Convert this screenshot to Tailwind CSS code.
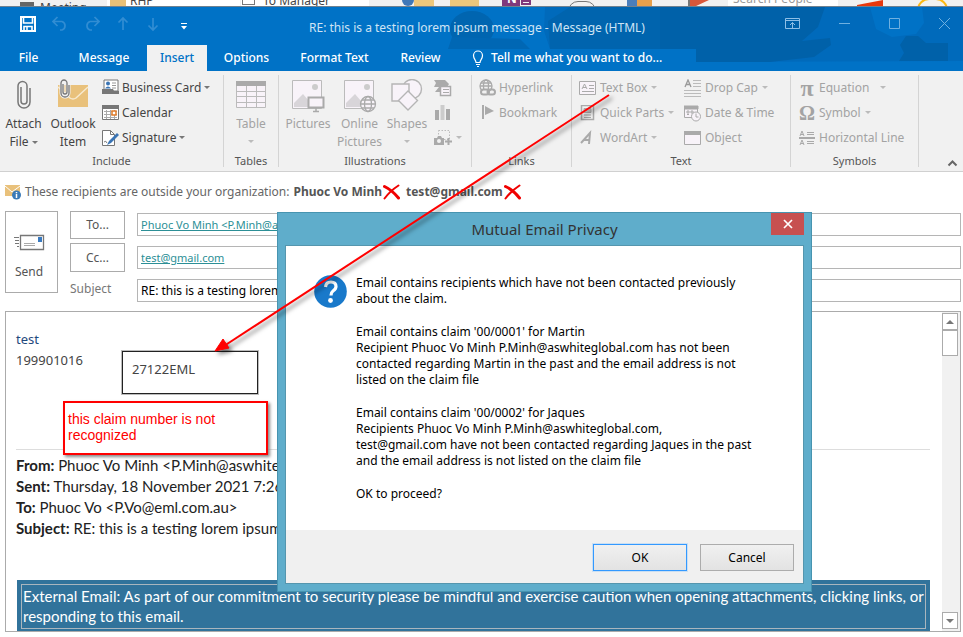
<!DOCTYPE html>
<html lang="en">
<head>
<meta charset="utf-8">
<title>RE: this is a testing lorem ipsum message - Message (HTML)</title>
<script src="https://cdn.jsdelivr.net/npm/@tailwindcss/browser@4"></script>
</head>
<body class="relative flex min-h-screen flex-col overflow-hidden bg-white font-['Noto_Sans','Open_Sans',sans-serif] text-[12px] leading-4 text-[#444]">

<!-- window behind -->
<div class="relative h-[7px] shrink-0 overflow-hidden border-b border-[#6f8190] bg-[#f1f1f1]" aria-hidden="true">
  <div class="absolute left-5 top-[2px] h-4 w-[14px] bg-[#666]"></div>
  <div class="absolute left-[40px] top-0 text-[12px] leading-4">Meeting</div>
  <div class="absolute left-[107px] top-0 h-4 w-[133px] bg-white"></div>
  <div class="absolute left-[110px] top-0 h-4 w-4 bg-[#e8c078]"></div>
  <div class="absolute left-[130px] -top-[7px] text-[12px] leading-4">RHP</div>
  <div class="absolute left-[241px] top-0 h-4 w-[128px] bg-white"></div>
  <div class="absolute left-[242px] -top-[5px] h-[10px] w-[13px] border border-[#777]"></div>
  <div class="absolute left-[263px] -top-[7px] text-[12px] leading-4">To Manager</div>
  <div class="absolute left-[402px] -top-[6px] h-3 w-3 rounded-full bg-[#3f78b8]"></div>
  <div class="absolute left-[414px] top-0 h-4 w-[20px] bg-[#ecc77c]"></div>
  <div class="absolute left-[450px] top-0 h-4 w-[29px] bg-[#ecc77c]"></div>
  <div class="absolute left-[502px] top-0 h-4 w-[18px] bg-[#80397b]"></div>
  <div class="absolute left-[507px] -top-[9px] text-[12px] font-bold leading-4 text-white">N</div>
  <div class="absolute left-[521px] top-0 h-[5px] w-[10px] border-2 border-[#80397b]"></div>
  <div class="absolute left-[568px] top-[1px] h-5 w-7 rounded-full border border-[#777]"></div>
  <div class="absolute left-[627px] top-0 h-4 w-[10px] bg-[#4a7ebb]"></div>
  <div class="absolute left-[637px] top-0 h-4 w-[15px] bg-[#e8a04c]"></div>
  <div class="absolute left-[688px] top-0 h-4 w-[2px] bg-[#777]"></div>
  <svg class="absolute left-[690px] top-0" width="20" height="7"><path d="M0 0h19L4 7H0z" fill="#d9573a"/></svg>
  <div class="absolute left-[728px] top-0 h-4 w-[110px] bg-white"></div>
  <div class="absolute left-[733px] -top-[9px] text-[12px] leading-4 text-[#999]">Search People</div>
  <svg class="absolute left-[857px] top-0" width="28" height="7"><path d="M0 5L26 0v7H0z" fill="#e8380d"/></svg>
  <div class="absolute left-[917px] -top-[2px] h-6 w-[31px] rounded-full border-2 border-[#fdb913]"></div>
</div>

<!-- title bar and tabs -->
<header class="relative shrink-0 bg-[#0072c6] text-white">
  <svg class="absolute inset-y-0 right-0" width="643" height="64" viewBox="0 0 643 64" aria-hidden="true">
    <ellipse cx="152" cy="22" rx="22" ry="18" fill="#0065b0"/>
    <path d="M132 30L200 32L210 42H128z" fill="#0067b4"/>
    <path d="M225 0L643 0L643 54L376 55L376 42L230 42L224 24z" fill="#006abb"/>
    <path d="M228 14L250 0L340 0L340 42L230 42z" fill="#0064ae"/>
    <path d="M340 0L505 0L498 20L482 34L510 31L511 38L494 50L450 55L376 55L376 42L340 42z" fill="#0061a9"/>
    <path d="M550 0L602 0L604 16L596 27L572 30L556 22z" fill="#0072c6"/>
    <path d="M579 54L584 46L580 38L586 29L598 29L606 36L628 36L628 54z" fill="#0061a9"/>
  </svg>
  <div class="relative flex h-[38px] items-center">
    <div class="flex w-[309px] items-center gap-4 pl-5 pb-1">
      <button aria-label="Save"><svg width="16" height="16" fill="none" stroke="#fff" stroke-width="2"><path d="M1 1h14v14H1z"/><path d="M3.500 1v6h9V1M4 15v-4.500h8V15" stroke-width="1.600"/><path d="M7 11v4" stroke-width="1.500"/></svg></button>
      <button aria-label="Undo"><svg width="16" height="16" fill="none" stroke="#318dd3" stroke-width="1.700"><path d="M5.500 1L1 5.500L5.500 10M1.500 5.500H10a4.500 4.500 0 0 1 0 8.500H8"/></svg></button>
      <button aria-label="Redo"><svg width="16" height="16" fill="none" stroke="#318dd3" stroke-width="1.700"><path d="M10.500 1L15 5.500L10.500 10M14.500 5.500H6a4.500 4.500 0 0 0 0 8.500h2"/></svg></button>
      <button aria-label="Previous"><svg width="14" height="16" fill="none" stroke="#318dd3" stroke-width="1.700"><path d="M7 2v12M2.500 6.500L7 2l4.500 4.500"/></svg></button>
      <button aria-label="Next"><svg width="14" height="16" fill="none" stroke="#318dd3" stroke-width="1.700"><path d="M7 2v12M2.500 9.500L7 14l4.500-4.500"/></svg></button>
      <button aria-label="Customize toolbar"><svg width="16" height="16"><path d="M5 7.500h6" stroke="#fff"/><path d="M5 10h6l-3 3.500z" fill="#fff"/></svg></button>
    </div>
    <h1 class="whitespace-nowrap pt-1 text-[12px] text-[#cfe4f5]">RE: this is a testing lorem ipsum message - Message (HTML)</h1>
    <div class="ml-auto flex items-center gap-[37px] pr-3 pb-1">
      <button aria-label="Ribbon display options"><svg width="16" height="14" fill="none" stroke="#8fbfe6"><path d="M.5 1.500h14v10H.5zM.5 3.500h14M7.500 11V5.500M5 8l2.500-2.500L10 8"/></svg></button>
      <button aria-label="Minimize"><svg width="13" height="14" stroke="#6fb0e0"><path d="M1 6.500h11"/></svg></button>
      <button aria-label="Maximize"><svg width="13" height="14" fill="none" stroke="#6fb0e0"><path d="M1.500 1.500h10v10h-10z"/></svg></button>
      <button aria-label="Close"><svg width="13" height="14" stroke="#6fb0e0"><path d="M1 1l11 11M12 1L1 12"/></svg></button>
    </div>
  </div>
  <nav class="relative flex h-[26px] items-center font-medium">
    <button class="w-[57px]">File</button>
    <button class="w-[90px] pl-1">Message</button>
    <button class="h-full w-[60px] bg-[#f1f1f1] text-[#0072c6]">Insert</button>
    <button class="w-[79px]">Options</button>
    <button class="w-[97px]">Format Text</button>
    <button class="w-[75px]">Review</button>
    <button class="flex items-center gap-[7px] whitespace-nowrap pl-[14px]"><svg width="12" height="17" fill="none" stroke="#fff" stroke-width="1.200"><path d="M4 12.500C4 10 1.500 9 1.500 5.500a4.500 4.500 0 0 1 9 0C10.500 9 8 10 8 12.500zM4 14.500h4M5 16.500h2"/></svg>Tell me what you want to do...</button>
  </nav>
</header>

<!-- ribbon -->
<section class="flex h-[101px] shrink-0 whitespace-nowrap border-b border-[#d0d0d0] bg-[#f1f1f1] py-1" aria-label="Insert ribbon">
  <div class="flex w-[224px] flex-col border-r border-[#d4d4d4]">
    <div class="flex h-[75px] shrink-0">
      <button class="flex w-[47px] flex-col items-center leading-[18px]"><svg class="mb-1 mt-1 shrink-0" width="16" height="32" fill="none" stroke="#777" stroke-width="1.500"><path d="M5 8v14a3 3 0 0 0 6 0V7a4.500 4.500 0 0 0-9 0v16a6 6 0 0 0 12 0V9"/></svg><span>Attach</span><span>File<span class="ml-[3px] inline-block border-x-3 border-t-3 border-x-transparent border-t-[#777] align-middle"></span></span></button>
      <button class="flex w-[52px] flex-col items-center leading-[18px]"><svg class="mb-1 mt-1 shrink-0" width="32" height="32" fill="none"><path d="M1 6h30v22H1z" fill="#e9c17b"/><path d="M1 8l12 11q3 2 6 0L31 8" stroke="#f7ead0" stroke-width="1.500"/><path d="M6 5v8a2 2 0 0 0 4 0V4a3 3 0 0 0-6 0v10a4 4 0 0 0 8 0V6" stroke="#f1f1f1" stroke-width="3"/><path d="M6 5v8a2 2 0 0 0 4 0V4a3 3 0 0 0-6 0v10a4 4 0 0 0 8 0V6" stroke="#777" stroke-width="1.300"/></svg><span>Outlook</span><span>Item</span></button>
      <div class="flex flex-col pl-[3px]">
        <button class="flex h-[25px] items-center gap-[3px]"><svg width="17" height="17" fill="none"><path d="M2 1h14v11H2z" fill="#fff" stroke="#777"/><path d="M10 4h4M10 6.500h4M10 9h4" stroke="#999"/><circle cx="6" cy="4.500" r="2" fill="#3a74b4"/><path d="M3 9.500q3-4 6 0z" fill="#3a74b4"/><path d="M0 10h11l1 2h5v3H0z" fill="#777"/></svg>Business Card<span class="border-x-3 border-t-3 border-x-transparent border-t-[#777]"></span></button>
        <button class="flex h-[25px] items-center gap-[3px]"><svg width="17" height="17" fill="none"><path d="M.5 1.500h16v14H.5z" fill="#fff" stroke="#777"/><path d="M0 1h17v4H0z" fill="#777"/><path d="M2 7.500h13M2 10.500h13M2 13.500h13M4.500 6v9M8.500 6v9M12.500 6v9" stroke="#aaa"/><path d="M10 7h4v4h-4z" fill="#fff" stroke="#e07b28" stroke-width="1.500"/></svg>Calendar</button>
        <button class="flex h-[25px] items-center gap-[3px]"><svg width="17" height="18" fill="none"><path d="M.5 1.500h8l4 4v11H.5z" fill="#fff" stroke="#777"/><path d="M8.500 1.500v4h4" stroke="#777"/><path d="M15 4l2 2-8 8-4 2 2-4z" fill="#3a74b4"/><path d="M2 13q2-2 3 1" stroke="#777"/></svg>Signature<span class="border-x-3 border-t-3 border-x-transparent border-t-[#777]"></span></button>
      </div>
    </div>
    <div class="pt-[3px] text-center text-[11px] leading-4 text-[#555]">Include</div>
  </div>
  <div class="flex w-[55px] flex-col border-r border-[#d4d4d4] text-[#a3a3a3]">
    <button class="flex h-[75px] shrink-0 flex-col items-center leading-[18px]"><svg class="mb-1 mt-1 shrink-0" width="32" height="32" fill="none" stroke="#bbb"><path d="M1.500 2.500h29v26h-29z" fill="#f8f3f9"/><path d="M1.500 12.500h29M1.500 17.500h29M1.500 23.500h29M11.500 7v21M21.500 7v21"/><path d="M1 2h30v5H1z" fill="#aaa" stroke="none"/></svg><span>Table</span><span class="mt-[7px] border-x-3 border-t-3 border-x-transparent border-t-[#bbb]"></span></button>
    <div class="pt-[3px] text-center text-[11px] leading-4 text-[#555]">Tables</div>
  </div>
  <div class="flex w-[193px] flex-col border-r border-[#d4d4d4] text-[#a3a3a3]">
    <div class="flex h-[75px] shrink-0 pl-[3px]">
      <button class="flex w-[52px] flex-col items-center leading-[18px]"><svg class="mb-[2px] mt-1 shrink-0" width="34" height="34" fill="none"><path d="M1.500 1.500h29v28h-29z" fill="#f8f3f9" stroke="#bbb"/><path d="M3 28V24l9-9 6 7v6z" fill="#d8d5d9"/><circle cx="24" cy="8" r="3" fill="#ccc"/><path d="M17.500 18.500h15v10h-15z" fill="#f8f3f9" stroke="#aaa" stroke-width="2"/><path d="M25 29v3M22 32.500h6" stroke="#aaa" stroke-width="1.500"/></svg><span>Pictures</span></button>
      <button class="flex w-[51px] flex-col items-center leading-[18px]"><svg class="mb-[2px] mt-1 shrink-0" width="34" height="34" fill="none"><path d="M1.500 1.500h29v28h-29z" fill="#f8f3f9" stroke="#bbb"/><path d="M3 28V24l9-9 6 7v6z" fill="#d8d5d9"/><circle cx="24" cy="8" r="3" fill="#ccc"/><g stroke="#aaa" stroke-width="1.300"><circle cx="25" cy="25" r="7.500" fill="#f8f3f9"/><ellipse cx="25" cy="25" rx="3.500" ry="7.500"/><path d="M17.500 25h15M19 21h12M19 29h12"/></g></svg><span>Online</span><span>Pictures</span></button>
      <button class="flex w-[44px] flex-col items-center leading-[18px]"><svg class="mb-[2px] mt-1 shrink-0" width="34" height="34" fill="#f8f3f9" stroke="#b5b5b5" stroke-width="1.400"><circle cx="22" cy="10" r="9.500"/><path d="M2 5h17v17H2z"/><path d="M18 12l9.500 9.500L18 31l-9.500-9.500z"/></svg><span>Shapes</span><span class="mt-[7px] border-x-3 border-t-3 border-x-transparent border-t-[#bbb]"></span></button>
      <div class="flex flex-col pl-[5px]">
        <button class="flex h-[25px] items-center" aria-label="SmartArt"><svg width="18" height="18" fill="none"><path d="M0 1h11l4 4-2 3H8v5H1l4-5H0l2-4z" fill="#aaa"/><path d="M6.500 7.500h10v9h-10z" fill="#f8f3f9" stroke="#aaa" stroke-width="1.500"/><path d="M9 10.500h6M9 13.500h6" stroke="#aaa"/></svg></button>
        <button class="flex h-[25px] items-center" aria-label="Chart"><svg width="18" height="18"><path d="M1 6h4v10H1zM12 5h4v11h-4z" fill="#aaa"/><path d="M6.500 1h4v15h-4z" fill="#ccc"/></svg></button>
        <button class="flex h-[25px] items-center gap-1" aria-label="Screenshot"><svg width="18" height="18" fill="none"><path d="M4.500 1.500h11v9h-11z" stroke="#bbb" stroke-dasharray="1.500 1.500"/><path d="M0 9h3l1-2h3l1 2h2v7H0z" fill="#aaa"/><circle cx="5" cy="12" r="2" fill="#f1f1f1"/><path d="M11 12.500h7M14.500 9v7" stroke="#aaa" stroke-width="2"/></svg><span class="border-x-3 border-t-3 border-x-transparent border-t-[#bbb]"></span></button>
      </div>
    </div>
    <div class="pt-[3px] text-center text-[11px] leading-4 text-[#555]">Illustrations</div>
  </div>
  <div class="flex w-[100px] flex-col border-r border-[#d4d4d4] text-[#a3a3a3]">
    <div class="flex h-[75px] shrink-0 flex-col pl-[7px]">
      <button class="flex h-[25px] items-center gap-[3px]"><svg width="17" height="18" fill="none" stroke="#aaa" stroke-width="1.300"><circle cx="7" cy="7" r="6"/><ellipse cx="7" cy="7" rx="2.500" ry="6"/><path d="M1 7h12M2 4h10"/><rect x="2" y="10.500" width="8" height="5" rx="2.500" fill="#f1f1f1" stroke-width="2"/><rect x="8.500" y="10.500" width="7.500" height="5" rx="2.500" stroke-width="2"/></svg>Hyperlink</button>
      <button class="flex h-[25px] items-center gap-[3px]"><svg width="17" height="18"><path d="M3 1h2v14H3z" fill="#aaa"/><path d="M6 2l9 5-9 4z" fill="#aaa"/></svg>Bookmark</button>
    </div>
    <div class="pt-[3px] text-center text-[11px] leading-4 text-[#555]">Links</div>
  </div>
  <div class="flex w-[219px] flex-col border-r border-[#d4d4d4] text-[#a3a3a3]">
    <div class="flex h-[75px] shrink-0 pl-[7px]">
      <div class="flex w-[105px] flex-col">
        <button class="flex h-[25px] items-center gap-1"><svg width="17" height="16" fill="none" stroke="#aaa"><path d="M.5 1.500h16v13H.5z" fill="#f8f3f9"/><path d="M3 9l2.500-5L8 9M4 7.500h3M10 5.500h5M10 8.500h5M3 11.500h12"/></svg>Text Box<span class="border-x-3 border-t-3 border-x-transparent border-t-[#bbb]"></span></button>
        <button class="flex h-[25px] items-center gap-1"><svg width="17" height="16" fill="none" stroke="#aaa"><path d="M2.500.5h12v14h-12z" stroke-width="1.500"/><path d="M5 3.500h7v4H5zM5 10h7M5 12.500h7" fill="#bbb"/></svg>Quick Parts<span class="border-x-3 border-t-3 border-x-transparent border-t-[#bbb]"></span></button>
        <button class="flex h-[25px] items-center gap-1"><svg width="17" height="16" fill="none" stroke="#aaa" stroke-width="2"><path d="M2 13L11 3l-1 11M5 10h6"/></svg>WordArt<span class="border-x-3 border-t-3 border-x-transparent border-t-[#bbb]"></span></button>
      </div>
      <div class="flex flex-col">
        <button class="flex h-[25px] items-center gap-1"><svg width="17" height="18" fill="none" stroke="#bbb"><path d="M9 1.500h8M9 4.500h8M9 7.500h8M0 11.500h17M0 14.500h17M0 17.500h17"/><path d="M1 8l3-7 3 7M2 5.500h4" stroke="#999" stroke-width="1.300"/></svg>Drop Cap<span class="border-x-3 border-t-3 border-x-transparent border-t-[#bbb]"></span></button>
        <button class="flex h-[25px] items-center gap-1"><svg width="17" height="18" fill="none" stroke="#aaa"><path d="M.5 2.500h13v11H.5z" fill="#f8f3f9"/><path d="M0 2h14v3H0z" fill="#aaa"/><path d="M3 7h2v2H3zM7 7h2v2H7zM3 10.500h2"/><circle cx="12" cy="12.500" r="4.500" fill="#f8f3f9"/><path d="M12 9.500v3.500h2.500"/></svg>Date &amp; Time</button>
        <button class="flex h-[25px] items-center gap-1"><svg width="17" height="16" fill="none"><path d="M.5 1.500h16v13H.5z" fill="#f8f3f9" stroke="#aaa"/><path d="M0 1h17v4H0z" fill="#aaa"/></svg>Object</button>
      </div>
    </div>
    <div class="pt-[3px] text-center text-[11px] leading-4 text-[#555]">Text</div>
  </div>
  <div class="flex w-[128px] flex-col border-r border-[#d4d4d4] text-[#a3a3a3]">
    <div class="flex h-[75px] shrink-0 flex-col pl-2">
      <button class="flex h-[25px] items-center gap-1"><span class="w-4 text-center font-['Liberation_Serif',serif] text-[24px] font-bold">π</span>Equation<span class="ml-[7px] border-x-3 border-t-3 border-x-transparent border-t-[#bbb]"></span></button>
      <button class="flex h-[25px] items-center gap-1"><span class="w-4 text-center font-['Liberation_Serif',serif] text-[20px] font-bold">Ω</span>Symbol<span class="border-x-3 border-t-3 border-x-transparent border-t-[#bbb]"></span></button>
      <button class="flex h-[25px] items-center gap-1"><svg width="16" height="16" fill="none" stroke="#aaa"><path d="M8 2.500h7M8 4.500h7M8 11.500h7M8 13.500h7"/><path d="M0 8h16" stroke-width="2"/><path d="M1 6l2-5 2 5M2 4.500h3M1 15l2-5 2 5M2 13.500h3"/></svg>Horizontal Line</button>
    </div>
    <div class="pt-[3px] text-center text-[11px] leading-4 text-[#555]">Symbols</div>
  </div>
  <button class="ml-auto self-end px-[5px]" aria-label="Collapse the ribbon"><svg width="11" height="8" fill="none" stroke="#666" stroke-width="2"><path d="M1.500 6.500l4-4 4 4"/></svg></button>
</section>

<!-- recipients notice -->
<div class="flex h-9 shrink-0 items-center gap-1 whitespace-nowrap pl-[5px] pt-1 text-[#666]">
  <svg width="16" height="16" fill="none"><path d="M0 1h15v11H0z" fill="#e9c17b"/><path d="M0 2l7 6 8-6" stroke="#fff"/><circle cx="11.500" cy="11" r="4.500" fill="#3a7ab8"/><path d="M11.500 10v4M11.500 8v1.200" stroke="#fff" stroke-width="1.500"/></svg>
  <span>These recipients are outside your organization:</span>
  <span class="flex items-center font-bold text-[#555]">Phuoc Vo Minh<svg class="ml-px mr-[6px]" width="17" height="16" fill="none" stroke="#f00000" stroke-linecap="round"><path d="M1.500 2.500Q9 6 15.500 14" stroke-width="3"/><path d="M15.500 1.500Q7 7 1.500 14.500" stroke-width="2"/></svg>test@gmail.com<svg class="ml-px" width="17" height="16" fill="none" stroke="#f00000" stroke-linecap="round"><path d="M1.500 2.500Q9 6 15.500 14" stroke-width="3"/><path d="M15.500 1.500Q7 7 1.500 14.500" stroke-width="2"/></svg></span>
</div>

<!-- address fields -->
<form class="flex shrink-0 gap-3 pl-[5px] pr-[2px] pt-[3px]">
  <button type="button" class="flex h-[82px] w-[53px] flex-col items-center border border-[#ababab] pt-[22px] pr-[5px] text-[#555]"><svg class="mb-[13px] shrink-0" width="32" height="17" fill="none" stroke="#777"><path d="M7.500 1.500h23v14h-23z" stroke-width="1.300"/><path d="M11 9.500h11M11 11.500h11" stroke="#aaa"/><path d="M25 3h4v5h-4z" fill="#3a7ac0" stroke="none"/><path d="M1 3.500h5M2 6.500h4M2 9.500h4M4 12.500h2"/></svg>Send</button>
  <div class="grid flex-1 grid-cols-[55px_1fr] gap-x-3 gap-y-1">
    <button type="button" class="h-[28px] border border-[#ababab] text-[#555]">To...</button>
    <input aria-label="To" class="mt-[2px] h-[23px] w-full border border-[#b5b5b5] px-[3px] text-[11px] text-[#2c8f96] underline" value="Phuoc Vo Minh &lt;P.Minh@aswhiteglobal.com&gt;">
    <button type="button" class="h-[29px] border border-[#ababab] text-[#555]">Cc...</button>
    <input aria-label="Cc" class="mt-[3px] h-[23px] w-full border border-[#b5b5b5] px-[3px] text-[11px] text-[#2c8f96] underline" value="test@gmail.com">
    <label for="subject" class="pt-[5px] text-[#777]">Subject</label>
    <input id="subject" class="mt-[3px] h-[23px] w-full border border-[#b5b5b5] px-[3px] text-black" value="RE: this is a testing lorem ipsum message">
  </div>
</form>

<!-- message body -->
<main class="relative mb-[5px] ml-[5px] mr-[2px] mt-[9px] flex flex-1 border border-[#ababab]">
  <article class="flex flex-1 flex-col pl-[10px] pr-3 pt-[17px] font-[Lato,sans-serif] text-[15px] leading-[21px] text-[#222]">
    <p class="font-['Noto_Sans',sans-serif] text-[13px] text-[#1f497d]">test</p>
    <p class="font-['Noto_Sans',sans-serif] text-[13px] text-[#444]">199901016</p>
    <hr class="mt-[78px] mb-[5px] border-[#ddd]">
    <p><b>From:</b> Phuoc Vo Minh &lt;P.Minh@aswhiteglobal.com&gt;</p>
    <p><b>Sent:</b> Thursday, 18 November 2021 7:26 AM</p>
    <p><b>To:</b> Phuoc Vo &lt;P.Vo@eml.com.au&gt;</p>
    <p><b>Subject:</b> RE: this is a testing lorem ipsum message</p>
    <div class="ml-px mt-auto bg-[#31739b] px-1 pb-[2px] pt-1 text-white">
      <p class="border border-[#a9b6be] pl-px pb-[2px] pt-px leading-[20px]">External Email: As part of our commitment to security please be mindful and exercise caution when opening attachments, clicking links, or responding to this email.</p>
    </div>
  </article>
  <div class="flex w-[18px] flex-col bg-[#f1f1f1] pt-px pr-[2px] pb-[2px]" aria-hidden="true">
    <div class="flex h-[17px] items-center justify-center border border-[#ababab] bg-white"><span class="border-x-4 border-b-4 border-x-transparent border-b-[#777]"></span></div>
    <div class="h-[26px] border border-[#ababab] bg-white"></div>
    <div class="mt-auto flex h-[17px] items-center justify-center border border-[#ababab] bg-white"><span class="border-x-4 border-t-4 border-x-transparent border-t-[#777]"></span></div>
  </div>
  <div class="absolute left-[116px] top-[39px] h-[43px] w-[136px] border border-[#222] bg-white px-[9px] py-2 text-[13px] leading-[18px] outline outline-[#222]/30">27122EML</div>
  <div class="absolute left-[57px] top-[89px] h-[54px] w-[205px] border-2 border-[#f00] bg-white px-[3px] pt-2 font-['Liberation_Sans',sans-serif] text-[14px] leading-4 text-[#f00] shadow-[2px_2px_3px_#888]">this claim number is not recognized</div>
</main>

<!-- confirmation dialog -->
<div role="dialog" aria-labelledby="dlg" class="absolute left-[277px] top-[212px] flex h-[380px] w-[535px] flex-col border border-[#4794b0] bg-[#5fadcb] px-[7px] pb-[7px] text-black">
  <div class="relative flex h-8 items-center justify-center">
    <h2 id="dlg" class="text-[15px] text-[#333]">Mutual Email Privacy</h2>
    <button class="absolute right-0 top-0 flex h-[22px] w-[33px] items-center justify-center bg-[#c75050]" aria-label="Close dialog"><svg width="10" height="10" stroke="#fff" stroke-width="1.700"><path d="M1 1l8 8M9 1L1 9"/></svg></button>
  </div>
  <div class="flex flex-1 flex-col border border-[#5596ae] bg-white">
    <div class="flex flex-1 gap-[9px] pl-7 pt-[29px]">
      <svg class="shrink-0" width="33" height="33"><circle cx="16.500" cy="16.500" r="16.300" fill="#1979ca"/><path d="M11.500 12q.5-5 5.500-5q5 0 5 4.500q0 2.500-3 4.500q-2 1.500-2 4.500" fill="none" stroke="#fff" stroke-width="3.200"/><circle cx="16.500" cy="25.500" r="2.400" fill="#fff"/></svg>
      <div class="flex flex-col gap-[17px] whitespace-nowrap">
        <p>Email contains recipients which have not been contacted previously<br>about the claim.</p>
        <p>Email contains claim '00/0001' for Martin<br>Recipient Phuoc Vo Minh P.Minh@aswhiteglobal.com has not been<br>contacted regarding Martin in the past and the email address is not<br>listed on the claim file</p>
        <p>Email contains claim '00/0002' for Jaques<br>Recipients Phuoc Vo Minh P.Minh@aswhiteglobal.com,<br>test@gmail.com have not been contacted regarding Jaques in the past<br>and the email address is not listed on the claim file</p>
        <p>OK to proceed?</p>
      </div>
    </div>
    <div class="flex h-[53px] items-center justify-end gap-[13px] bg-[#f0f0f0] pr-[9px] pt-[2px]">
      <button class="h-[27px] w-[94px] border border-[#3399ff] bg-linear-to-b from-[#f0f0f0] to-[#e3e3e3] outline outline-[#3399ff]/20">OK</button>
      <button class="h-[27px] w-[94px] border border-[#acacac] bg-linear-to-b from-[#f0f0f0] to-[#e3e3e3]">Cancel</button>
    </div>
  </div>
</div>

<!-- annotation arrow -->
<svg class="pointer-events-none absolute left-0 top-0 drop-shadow-[3px_3px_2px_rgba(0,0,0,0.5)]" width="640" height="370" aria-hidden="true"><path d="M609 95L224 346" stroke="#f00" stroke-width="2"/><path d="M215 351l8-12 6 9z" fill="#f00" stroke="#f00"/></svg>
</body>
</html>
